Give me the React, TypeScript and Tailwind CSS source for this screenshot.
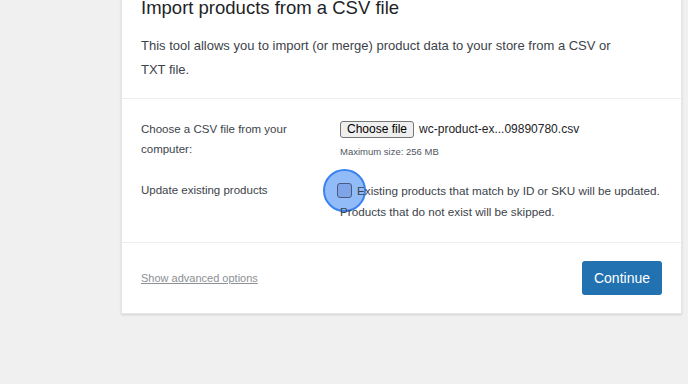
import React from "react";

const App = () => {
  return (
    <div
      className="w-[688px] h-[384px] overflow-hidden bg-[#f0f0f1] text-[#3c434a]"
      style={{ fontFamily: '"Liberation Sans", Arial, sans-serif' }}
    >
      <div className="ml-[121px] w-[561px] -mt-[8px] bg-white shadow-[0_1px_2px_rgba(0,0,0,0.12)] border border-[#e5e5e5]">
        {/* header */}
        <div className="px-[19px] pt-0 pb-[16px]">
          <h2 className="text-[18.5px] leading-[30px] text-[#1d2327]">Import products from a CSV file</h2>
          <p className="mt-[11px] text-[13px] leading-[24px] max-w-[480px]">
            This tool allows you to import (or merge) product data to your store from a CSV or TXT file.
          </p>
        </div>

        {/* fields */}
        <div className="border-t border-[#eeeeee] px-[19px] pt-[20px] pb-[20px]">
          <div className="flex">
            <div className="w-[199px] shrink-0 text-[11.5px] leading-[20px] pr-[50px]">Choose a CSV file from your computer:</div>
            <div className="flex flex-col">
              <div className="flex items-center gap-[5px] h-[20px]">
                <button className="px-[6px] h-[17px] leading-[15px] text-[12px] text-black bg-[#efefef] border border-[#767676] rounded-[3px]">
                  Choose file
                </button>
                <span className="text-[12px] text-[#1d2327]">wc-product-ex...09890780.csv</span>
              </div>
              <span className="mt-[8px] text-[9.5px] leading-[10px] text-[#50575e]">Maximum size: 256 MB</span>
            </div>
          </div>

          <div className="flex mt-[21px]">
            <div className="w-[199px] shrink-0 text-[11.5px] leading-[20px]">Update existing products</div>
            <div className="relative text-[11.7px] leading-[21px]">
              <span className="absolute -left-[17px] -top-[11px] w-[43px] h-[43px] rounded-full bg-[#7fb0f7]/85 border-2 border-[#3a83f0]" />
              <div className="relative flex items-center gap-[5px] whitespace-nowrap -ml-[3px]">
                <span className="w-[15px] h-[15px] rounded-[3px] border border-[#4a5a80] bg-[#7fa5e8]" />
                <span>Existing products that match by ID or SKU will be updated.</span>
              </div>
              <div className="relative">Products that do not exist will be skipped.</div>
            </div>
          </div>
        </div>

        {/* footer */}
        <div className="border-t border-[#eeeeee] px-[19px] py-[18px] flex items-center justify-between">
          <a className="text-[11px] text-[#8c8f94] underline">Show advanced options</a>
          <button className="w-[80px] h-[34px] rounded-[3px] bg-[#2271b1] text-white text-[14px]">Continue</button>
        </div>
      </div>
    </div>
  );
};

export default App;
